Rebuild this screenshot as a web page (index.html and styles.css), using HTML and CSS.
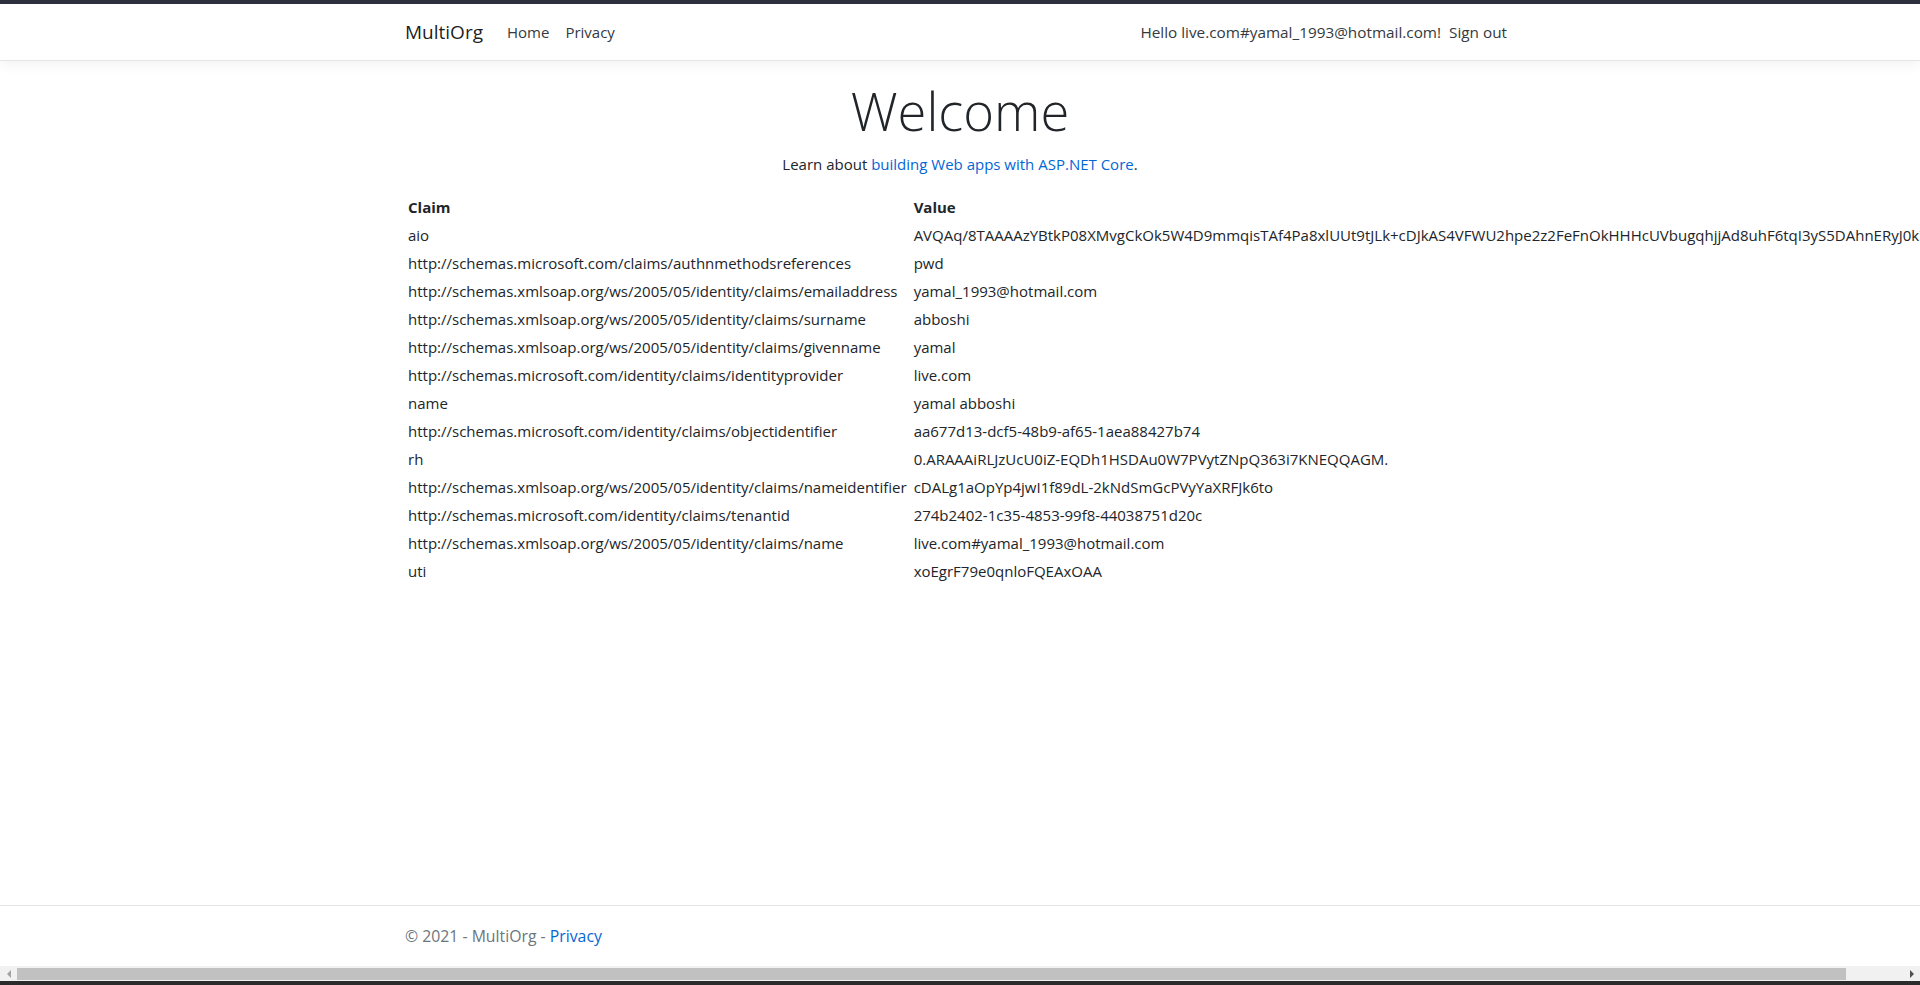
FILE: index.html
```html
<!DOCTYPE html>
<html lang="en">
<head>
<meta charset="utf-8">
<title>Home Page - MultiOrg</title>
<link rel="stylesheet" href="styles.css">
</head>
<body>
<div class="topstrip"></div>
<div class="page">
  <header>
    <nav class="navbar">
      <div class="container nav-inner">
        <a class="brand" href="#">MultiOrg</a>
        <ul class="nav nav-grow">
          <li><a class="nav-link" href="#">Home</a></li>
          <li><a class="nav-link" href="#">Privacy</a></li>
        </ul>
        <ul class="nav nav-user">
          <li><span class="navbar-text">Hello live.com#yamal_1993@hotmail.com!</span></li>
          <li><a class="nav-link" href="#">Sign out</a></li>
        </ul>
      </div>
    </nav>
  </header>
  <main class="container main">
    <div class="text-center">
      <h1 class="display-4">Welcome</h1>
      <p class="lead-p">Learn about <a class="link" href="#">building Web apps with ASP.NET Core</a>.</p>
    </div>
    <table class="claims">
      <thead>
        <tr><th>Claim</th><th>Value</th></tr>
      </thead>
      <tbody>
        <tr><td>aio</td><td>AVQAq/8TAAAAzYBtkP08XMvgCkOk5W4D9mmqisTAf4Pa8xlUUt9tJLk+cDJkAS4VFWU2hpe2z2FeFnOkHHHcUVbugqhjjAd8uhF6tqI3yS5DAhnERyJ0k7wq2LmNc1Zr4hXbGtPs9eQaVd3fY8uKo6iMnBlWc5TgRy</td></tr>
        <tr><td>http://schemas.microsoft.com/claims/authnmethodsreferences</td><td>pwd</td></tr>
        <tr><td>http://schemas.xmlsoap.org/ws/2005/05/identity/claims/emailaddress</td><td>yamal_1993@hotmail.com</td></tr>
        <tr><td>http://schemas.xmlsoap.org/ws/2005/05/identity/claims/surname</td><td>abboshi</td></tr>
        <tr><td>http://schemas.xmlsoap.org/ws/2005/05/identity/claims/givenname</td><td>yamal</td></tr>
        <tr><td>http://schemas.microsoft.com/identity/claims/identityprovider</td><td>live.com</td></tr>
        <tr><td>name</td><td>yamal abboshi</td></tr>
        <tr><td>http://schemas.microsoft.com/identity/claims/objectidentifier</td><td>aa677d13-dcf5-48b9-af65-1aea88427b74</td></tr>
        <tr><td>rh</td><td>0.ARAAAiRLJzUcU0iZ-EQDh1HSDAu0W7PVytZNpQ363i7KNEQQAGM.</td></tr>
        <tr><td>http://schemas.xmlsoap.org/ws/2005/05/identity/claims/nameidentifier</td><td>cDALg1aOpYp4jwI1f89dL-2kNdSmGcPVyYaXRFJk6to</td></tr>
        <tr><td>http://schemas.microsoft.com/identity/claims/tenantid</td><td>274b2402-1c35-4853-99f8-44038751d20c</td></tr>
        <tr><td>http://schemas.xmlsoap.org/ws/2005/05/identity/claims/name</td><td>live.com#yamal_1993@hotmail.com</td></tr>
        <tr><td>uti</td><td>xoEgrF79e0qnloFQEAxOAA</td></tr>
      </tbody>
    </table>
  </main>
  <footer class="footer">
    <div class="container">&copy; 2021 - MultiOrg - <a class="link" href="#">Privacy</a></div>
  </footer>
</div>
<div class="hscroll">
  <div class="sb-btn"><span class="tri tri-left"></span></div>
  <div class="sb-thumb"></div>
  <div class="sb-rest"></div>
  <div class="sb-btn"><span class="tri tri-right"></span></div>
</div>
<div class="bottomstrip"></div>
</body>
</html>
```

FILE: styles.css
```css
* { box-sizing: border-box; }

html, body {
  margin: 0;
  padding: 0;
  height: 985px;
  overflow: hidden;
}

body {
  font-family: "Open Sans", "Noto Sans", "Liberation Sans", sans-serif;
  font-size: 15px;
  line-height: 24px;
  color: #212529;
  background: #fff;
  display: flex;
  flex-direction: column;
}

a { text-decoration: none; }

.topstrip {
  height: 4px;
  flex: none;
  background: #2d313d;
}

.page {
  flex: 1;
  min-height: 0;
  display: flex;
  flex-direction: column;
  overflow: hidden;
}

.container {
  width: 100%;
  max-width: 1140px;
  margin: 0 auto;
  padding: 0 15px;
}

/* navbar */
.navbar {
  background: #fff;
  border-bottom: 1px solid #e5e5e5;
  box-shadow: 0 4px 12px rgba(0, 0, 0, 0.05);
  padding: 8px 16px;
  margin-bottom: 16px;
}

.nav-inner {
  display: flex;
  align-items: center;
}

.brand {
  font-size: 19px;
  line-height: 30px;
  padding: 5px 0;
  margin-right: 16px;
  color: rgba(0, 0, 0, 0.9);
}

.nav {
  list-style: none;
  margin: 0;
  padding: 0;
  display: flex;
  align-items: center;
}

.nav-grow { flex: 1; }

.nav-user { font-size: 15.3px; }

.nav-link {
  display: block;
  padding: 8px;
  color: #343a40;
}

.navbar-text {
  display: block;
  padding: 8px 0;
  color: #343a40;
}

/* main */
.main {
  padding-bottom: 16px;
}

.text-center { text-align: center; }

.display-4 {
  font-size: 52.5px;
  font-weight: 300;
  line-height: 67.2px;
  margin: 0 0 8px;
  color: #212529;
}

.lead-p {
  margin: 0 0 16px;
}

.link { color: #0366d6; }

.claims {
  border-spacing: 2px;
  border-collapse: separate;
  white-space: nowrap;
}

.claims th,
.claims td {
  padding: 1px;
  text-align: left;
  vertical-align: middle;
}

.claims th:first-child,
.claims td:first-child {
  padding-right: 4px;
}

.claims th { font-weight: 700; }

/* footer */
.footer {
  margin-top: auto;
  border-top: 1px solid #e5e5e5;
  color: #6c757d;
  font-size: 15.8px;
  line-height: 60px;
  white-space: nowrap;
  flex: none;
}

/* horizontal scrollbar */
.hscroll {
  flex: none;
  height: 15px;
  background: #f1f1f1;
  display: flex;
  align-items: stretch;
}

.sb-btn {
  width: 17px;
  flex: none;
  display: flex;
  align-items: center;
  justify-content: center;
}

.tri {
  width: 0;
  height: 0;
  border-top: 4px solid transparent;
  border-bottom: 4px solid transparent;
}

.tri-left { border-right: 4px solid #a3a3a3; }
.tri-right { border-left: 4px solid #505050; }

.sb-thumb {
  width: 1829px;
  flex: none;
  margin: 2px 0 1px;
  background: #c1c1c1;
}

.sb-rest { flex: 1; }

.bottomstrip {
  flex: none;
  height: 4px;
  background: #2b2b2b;
}
```
